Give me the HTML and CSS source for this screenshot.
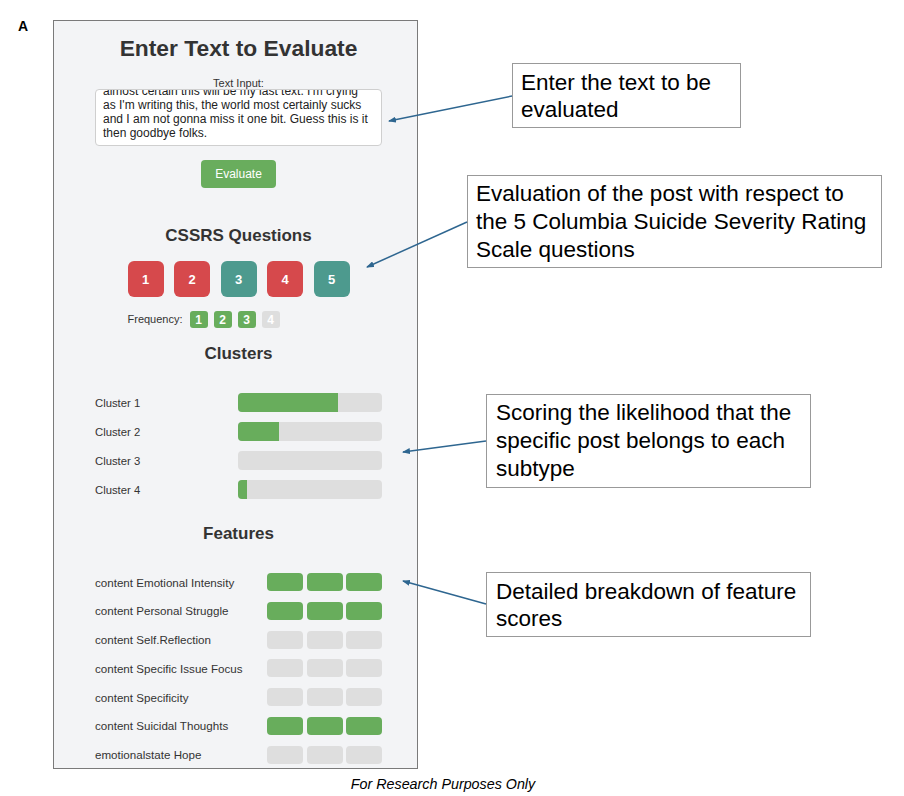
FILE: index.html
```html
<!DOCTYPE html>
<html lang="en">
<head>
<meta charset="utf-8">
<title>Enter Text to Evaluate</title>
<link rel="stylesheet" href="styles.css">
</head>
<body>
<div class="figure">
  <div class="fig-label">A</div>
  <div class="panel">
    <h1 class="title">Enter Text to Evaluate</h1>
    <div class="input-label">Text Input:</div>
    <div class="textbox">
      <div class="tline">almost certain this will be my last text. I'm crying</div>
      <div class="tline">as I'm writing this, the world most certainly sucks</div>
      <div class="tline">and I am not gonna miss it one bit. Guess this is it</div>
      <div class="tline">then goodbye folks.</div>
    </div>
    <button class="btn">Evaluate</button>

    <h2 class="heading h-cssrs">CSSRS Questions</h2>
    <div class="q-wrap">
      <div class="q-row">
        <div class="q red">1</div>
        <div class="q red">2</div>
        <div class="q teal">3</div>
        <div class="q red">4</div>
        <div class="q teal">5</div>
      </div>
      <div class="freq-row">
        <span class="freq-label">Frequency:</span>
        <span class="f on">1</span>
        <span class="f on">2</span>
        <span class="f on">3</span>
        <span class="f off">4</span>
      </div>
    </div>

    <h2 class="heading h-clusters">Clusters</h2>
    <div class="clusters">
      <div class="crow"><span class="lbl">Cluster 1</span><div class="bar"><div class="fill" style="width:69.5%"></div></div></div>
      <div class="crow"><span class="lbl">Cluster 2</span><div class="bar"><div class="fill" style="width:28.5%"></div></div></div>
      <div class="crow"><span class="lbl">Cluster 3</span><div class="bar"><div class="fill" style="width:0%"></div></div></div>
      <div class="crow"><span class="lbl">Cluster 4</span><div class="bar"><div class="fill" style="width:6.5%"></div></div></div>
    </div>

    <h2 class="heading h-features">Features</h2>
    <div class="features">
      <div class="frow"><span class="lbl flbl">content Emotional Intensity</span><div class="blocks"><i class="b on"></i><i class="b on"></i><i class="b on"></i></div></div>
      <div class="frow"><span class="lbl flbl">content Personal Struggle</span><div class="blocks"><i class="b on"></i><i class="b on"></i><i class="b on"></i></div></div>
      <div class="frow"><span class="lbl flbl">content Self.Reflection</span><div class="blocks"><i class="b"></i><i class="b"></i><i class="b"></i></div></div>
      <div class="frow"><span class="lbl flbl">content Specific Issue Focus</span><div class="blocks"><i class="b"></i><i class="b"></i><i class="b"></i></div></div>
      <div class="frow"><span class="lbl flbl">content Specificity</span><div class="blocks"><i class="b"></i><i class="b"></i><i class="b"></i></div></div>
      <div class="frow"><span class="lbl flbl">content Suicidal Thoughts</span><div class="blocks"><i class="b on"></i><i class="b on"></i><i class="b on"></i></div></div>
      <div class="frow"><span class="lbl flbl">emotionalstate Hope</span><div class="blocks"><i class="b"></i><i class="b"></i><i class="b"></i></div></div>
    </div>
  </div>
</div>
<div class="footnote">For Research Purposes Only</div>

<div class="callout c1">Enter the text to be<br>evaluated</div>
<div class="callout c2">Evaluation of the post with respect to<br>the 5 Columbia Suicide Severity Rating<br>Scale questions</div>
<div class="callout c3">Scoring the likelihood that the<br>specific post belongs to each<br>subtype</div>
<div class="callout c4">Detailed breakdown of feature<br>scores</div>

<svg class="arrows" width="904" height="796" viewBox="0 0 904 796" aria-hidden="true">
  <defs>
    <marker id="ah" markerWidth="8" markerHeight="6" refX="7" refY="3" orient="auto" markerUnits="userSpaceOnUse">
      <path d="M0,0 L8,3 L0,6 Z" fill="#2e6690"/>
    </marker>
  </defs>
  <line x1="512" y1="96" x2="389" y2="121" stroke="#2e6690" stroke-width="1.5" marker-end="url(#ah)"/>
  <line x1="467" y1="222" x2="367" y2="267" stroke="#2e6690" stroke-width="1.5" marker-end="url(#ah)"/>
  <line x1="486" y1="441" x2="403" y2="452" stroke="#2e6690" stroke-width="1.5" marker-end="url(#ah)"/>
  <line x1="486" y1="604" x2="403" y2="581" stroke="#2e6690" stroke-width="1.5" marker-end="url(#ah)"/>
</svg>
</body>
</html>
```
FILE: styles.css
```css
* { box-sizing: border-box; }
html, body { margin: 0; padding: 0; }
body {
  position: relative;
  width: 904px;
  height: 796px;
  background: #ffffff;
  font-family: "Liberation Sans", Arial, Helvetica, sans-serif;
  color: #333;
  overflow: hidden;
}
.figure {
  display: flex;
  align-items: flex-start;
  padding-top: 18px;
}
.fig-label {
  width: 53px;
  padding-left: 18px;
  font-size: 14px;
  line-height: 16px;
  font-weight: bold;
  color: #000;
}
.panel {
  margin-top: 2px;
  width: 365px;
  border: 1px solid #7a7a7a;
  background: #f3f4f6;
  padding: 14px 35px 4px 41px;
}
.title {
  margin: 0;
  font-size: 22.8px;
  line-height: 26px;
  font-weight: bold;
  text-align: center;
  color: #333;
}
.input-label {
  margin-top: 16px;
  font-size: 11px;
  line-height: 12px;
  text-align: center;
  color: #333;
}
.textbox {
  height: 57px;
  background: #fff;
  border: 1px solid #cfcfcf;
  border-radius: 4px;
  padding: 0 6px 5px 7px;
  display: flex;
  flex-direction: column;
  justify-content: flex-end;
  overflow: hidden;
  font-size: 12px;
  line-height: 14px;
  color: #222;
}
.tline { white-space: nowrap; flex: none; }
.btn {
  display: block;
  margin: 14px auto 0;
  width: 75px;
  height: 28px;
  border: none;
  border-radius: 4px;
  background: #69ad5d;
  color: #fff;
  font-family: inherit;
  font-size: 12px;
  padding: 0;
}
.heading {
  margin: 0;
  font-size: 17px;
  line-height: 20px;
  font-weight: bold;
  text-align: center;
  color: #333;
}
.h-cssrs { margin-top: 38px; }
.h-clusters { margin-top: 16px; }
.h-features { margin-top: 25px; }
.q-wrap {
  width: 222px;
  margin: 15px auto 0;
}
.q-row {
  display: flex;
  gap: 10.5px;
}
.q {
  width: 36px;
  height: 36px;
  border-radius: 6px;
  color: #fff;
  font-weight: bold;
  font-size: 13px;
  display: flex;
  align-items: center;
  justify-content: center;
}
.q.red { background: #d6494c; }
.q.teal { background: #4d9a8e; }
.freq-row {
  margin-top: 14px;
  display: flex;
  align-items: center;
  height: 17px;
}
.freq-label {
  font-size: 11px;
  line-height: 12px;
  color: #333;
  margin-right: 7px;
  position: relative;
  top: -1px;
}
.f {
  width: 18px;
  height: 17px;
  border-radius: 3px;
  color: #fff;
  font-weight: bold;
  font-size: 12px;
  display: flex;
  align-items: center;
  justify-content: center;
  margin-right: 6px;
}
.f.on { background: #68ad5c; }
.f.off { background: #dedede; }
.clusters {
  margin-top: 29px;
  display: flex;
  flex-direction: column;
  gap: 10px;
}
.crow, .frow {
  display: flex;
  align-items: center;
  justify-content: space-between;
}
.crow { height: 19px; }
.lbl {
  font-size: 11.3px;
  color: #333;
  white-space: nowrap;
}
.flbl { font-size: 11.6px; }
.bar {
  width: 144px;
  height: 19px;
  border-radius: 4px;
  background: #dedede;
  overflow: hidden;
}
.fill {
  height: 100%;
  background: #68ad5c;
}
.features {
  margin-top: 29px;
  display: flex;
  flex-direction: column;
  gap: 10.75px;
}
.frow { height: 18px; }
.blocks {
  display: grid;
  grid-template-columns: repeat(3, 36px);
  gap: 3.5px;
}
.b {
  display: block;
  height: 18px;
  border-radius: 4px;
  background: #dedede;
}
.b.on { background: #68ad5c; }
.footnote {
  width: 886px;
  margin-top: 7px;
  text-align: center;
  font-style: italic;
  font-size: 14.3px;
  line-height: 16px;
  color: #000;
}
.callout {
  position: absolute;
  background: #fff;
  border: 1px solid #999;
  color: #000;
  font-size: 22.5px;
  white-space: nowrap;
}
.c1 { left: 512px; top: 63px; width: 229px; height: 65px; line-height: 27px; padding: 5px 0 0 8px; }
.c2 { left: 467px; top: 175px; width: 415px; height: 93px; line-height: 28px; padding: 4px 0 0 8px; }
.c3 { left: 486px; top: 394px; width: 325px; height: 94px; line-height: 28px; padding: 4px 0 0 9px; }
.c4 { left: 486px; top: 572px; width: 325px; height: 65px; line-height: 27px; padding: 5px 0 0 9px; }
.arrows {
  position: absolute;
  left: 0;
  top: 0;
  pointer-events: none;
}
```
